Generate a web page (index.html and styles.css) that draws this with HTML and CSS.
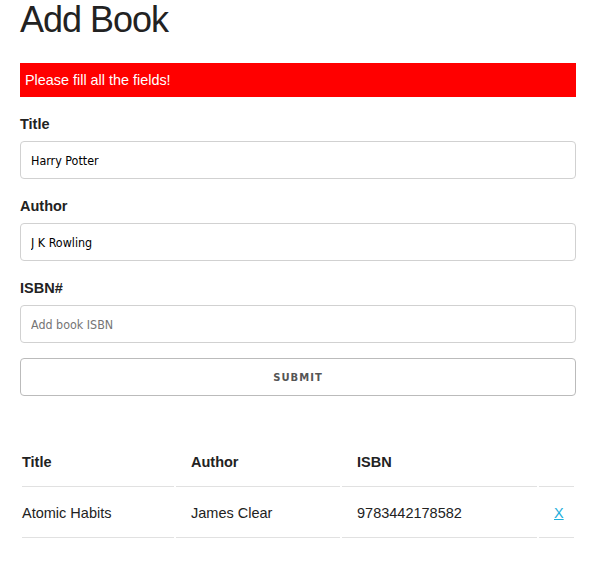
FILE: index.html
```html
<!DOCTYPE html>
<html>
<head>
<meta charset="utf-8">
<title>Add Book</title>
<link rel="stylesheet" href="styles.css">
</head>
<body>
<div class="container">
  <h1 class="title">Add Book</h1>
  <div class="alert">Please fill all the fields!</div>
  <form class="book-form">
    <label class="label" for="title">Title</label>
    <input class="input" id="title" type="text" value="Harry Potter">
    <label class="label" for="author">Author</label>
    <input class="input" id="author" type="text" value="J K Rowling">
    <label class="label" for="isbn">ISBN#</label>
    <input class="input" id="isbn" type="text" placeholder="Add book ISBN">
    <button class="button" type="button">Submit</button>
  </form>
  <table class="book-table">
    <thead>
      <tr>
        <th class="c1">Title</th>
        <th class="c2">Author</th>
        <th class="c3">ISBN</th>
        <th class="c4"></th>
      </tr>
    </thead>
    <tbody>
      <tr>
        <td>Atomic Habits</td>
        <td>James Clear</td>
        <td>9783442178582</td>
        <td><a href="#" class="delete">X</a></td>
      </tr>
    </tbody>
  </table>
</div>
</body>
</html>
```
FILE: styles.css
```css
html, body {
  margin: 0;
  padding: 0;
  background: #fff;
}
body {
  font-family: "Liberation Sans", Arial, sans-serif;
  color: #222;
  font-size: 14.5px;
  line-height: 24px;
}
.container {
  padding: 0 22px 0 20px;
}
.title {
  margin: 0 0 23px;
  font-size: 36px;
  line-height: 40px;
  letter-spacing: -1px;
  font-weight: normal;
}
.alert {
  background: #ff0000;
  color: #fff;
  height: 34px;
  line-height: 34px;
  padding: 0 5px;
  font-size: 14.4px;
  margin-bottom: 15px;
}
.book-form {
  margin: 0;
}
.label {
  display: block;
  font-weight: bold;
  font-size: 14.5px;
  line-height: 24px;
  margin-bottom: 5px;
}
.input {
  display: block;
  box-sizing: border-box;
  width: 100%;
  height: 38px;
  padding: 6px 10px;
  margin: 0 0 15px;
  border: 1px solid #d1d1d1;
  border-radius: 4px;
  background: #fff;
  font-family: "DejaVu Sans Condensed", "DejaVu Sans", sans-serif;
  font-size: 12.4px;
  color: #000;
  outline: none;
}
.input::placeholder {
  color: #757575;
}
.button {
  display: block;
  box-sizing: border-box;
  width: 100%;
  height: 38px;
  margin: 0 0 40px;
  padding: 2px 30px 0;
  border: 1px solid #bbb;
  border-radius: 4px;
  background: transparent;
  color: #555;
  font-family: "DejaVu Sans", sans-serif;
  font-weight: bold;
  font-size: 10px;
  letter-spacing: 1px;
  text-transform: uppercase;
  line-height: 34px;
  text-align: center;
}
.book-table {
  width: 556px;
  table-layout: fixed;
  border-collapse: separate;
  border-spacing: 2px;
}
.book-table th,
.book-table td {
  box-sizing: border-box;
  padding: 12px 15px;
  text-align: left;
  border-bottom: 1px solid #e1e1e1;
  font-size: 14.5px;
  line-height: 24px;
}
.book-table th {
  font-weight: bold;
}
.book-table th:first-child,
.book-table td:first-child {
  padding-left: 0;
}
.book-table th:last-child,
.book-table td:last-child {
  padding-right: 0;
}
.c1 { width: 152px; }
.c2 { width: 164px; }
.c3 { width: 195px; }
.c4 { width: 35px; }
.delete {
  color: #1eaedb;
  text-decoration: underline;
}
```
